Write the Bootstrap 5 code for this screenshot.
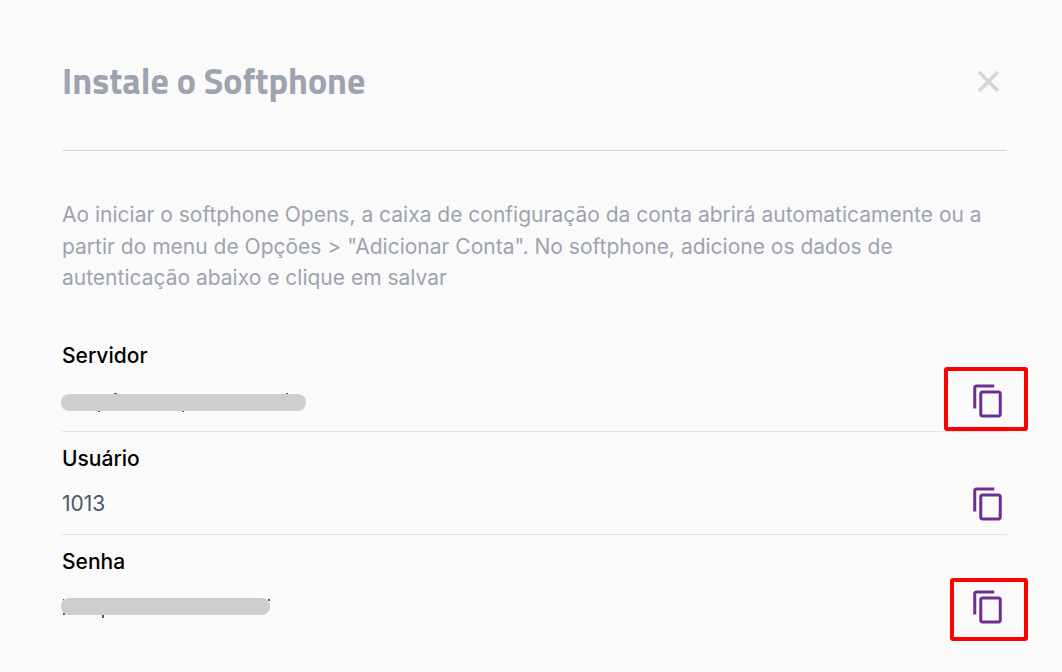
<!DOCTYPE html>
<html lang="pt-BR">
<head>
<meta charset="utf-8">
<meta name="viewport" content="width=device-width, initial-scale=1">
<title>Instale o Softphone</title>
<link href="https://cdn.jsdelivr.net/npm/bootstrap@5.3.0/dist/css/bootstrap.min.css" rel="stylesheet">
<style>
  body { background: #fafafa; font-family: Inter, "Liberation Sans", sans-serif; font-size: 21px; line-height: 1.5; }
  .panel { padding: 54px 55px 24px 62px; }
  .panel-head { padding-bottom: 42px; margin-bottom: 48px; border-bottom: 1px solid #d5d6da; }
  .panel-title { font-family: "Titillium Web", "Noto Sans", sans-serif; font-size: 36px; font-weight: 700; line-height: 54px; color: #9ea3b0; }
  .intro { color: #9ea3b0; margin-bottom: 35px; }
  .field { padding: 11px 0 12px; border-bottom: 1px solid #e2e3e7; }
  .field:last-child { border-bottom: 0; }
  .field dt { font-weight: 500; line-height: 32px; color: #000; margin-bottom: 11px; }
  .field dd { height: 36px; color: #4c566a; }
  .icon-btn { width: 36px; height: 36px; color: #6b2f94; }
  .icon-btn svg { display: block; }
  .close-btn { color: #d3d5dc; }
  .marker { border: 4px solid #f00; border-radius: 3px; pointer-events: none; }
  .marker-wide { inset: -16px -21px -12px -27px; }
  .marker-narrow { inset: -11px -21px -16px -21px; }
  .redacted { margin-left: -1px; }
</style>
</head>
<body>
<main class="panel">
  <header class="panel-head d-flex justify-content-between align-items-center">
    <h1 class="panel-title m-0">Instale o Softphone</h1>
    <button type="button" class="btn p-0 border-0 icon-btn close-btn" aria-label="Fechar">
      <svg width="36" height="36" viewBox="0 0 36 36" fill="none" stroke="currentColor" stroke-width="3.500"><path d="M8 9 27 28M27 9 8 28"/></svg>
    </button>
  </header>

  <p class="intro">Ao iniciar o softphone Opens, a caixa de configuração da conta abrirá automaticamente ou a partir do menu de Opções &gt; "Adicionar Conta". No softphone, adicione os dados de autenticação abaixo e clique em salvar</p>

  <svg class="d-none" aria-hidden="true">
    <symbol id="copy" viewBox="0.5 0 24 24"><path fill="currentColor" d="M16 1H4c-1.100 0-2 .9-2 2v14h2V3h12V1zm3 4H8c-1.100 0-2 .9-2 2v14c0 1.100.9 2 2 2h11c1.100 0 2-.9 2-2V7c0-1.100-.9-2-2-2zm0 16H8V7h11v14z"/></symbol>
  </svg>

  <dl class="m-0">
    <div class="field">
      <dt>Servidor</dt>
      <dd class="d-flex justify-content-between align-items-center m-0">
        <svg class="redacted" width="246" height="24" viewBox="0 0 246 24" role="img" aria-label="Oculto">
          <path d="M53 5h3M225 5h2M38 21v2M122 21v2" stroke="#4c566a" stroke-width="2"/>
          <rect y="5" width="245" height="17" rx="8" fill="#cecece"/>
        </svg>
        <button type="button" class="btn p-0 border-0 icon-btn position-relative" aria-label="Copiar servidor">
          <svg width="36" height="36"><use href="#copy"/></svg>
          <span class="marker marker-wide position-absolute"></span>
        </button>
      </dd>
    </div>
    <div class="field">
      <dt>Usuário</dt>
      <dd class="d-flex justify-content-between align-items-center m-0">
        <span>1013</span>
        <button type="button" class="btn p-0 border-0 icon-btn" aria-label="Copiar usuário">
          <svg width="36" height="36"><use href="#copy"/></svg>
        </button>
      </dd>
    </div>
    <div class="field">
      <dt>Senha</dt>
      <dd class="d-flex justify-content-between align-items-center m-0">
        <svg class="redacted" width="210" height="24" viewBox="0 0 210 24" role="img" aria-label="Oculta">
          <path d="M2 5h1M207 5h2M2 19h2M42 19v4" stroke="#4c566a" stroke-width="2"/>
          <rect y="3" width="209" height="17" rx="8" fill="#cecece"/>
        </svg>
        <button type="button" class="btn p-0 border-0 icon-btn position-relative" aria-label="Copiar senha">
          <svg width="36" height="36"><use href="#copy"/></svg>
          <span class="marker marker-narrow position-absolute"></span>
        </button>
      </dd>
    </div>
  </dl>
</main>
<script src="https://cdn.jsdelivr.net/npm/bootstrap@5.3.0/dist/js/bootstrap.bundle.min.js"></script>
</body>
</html>
